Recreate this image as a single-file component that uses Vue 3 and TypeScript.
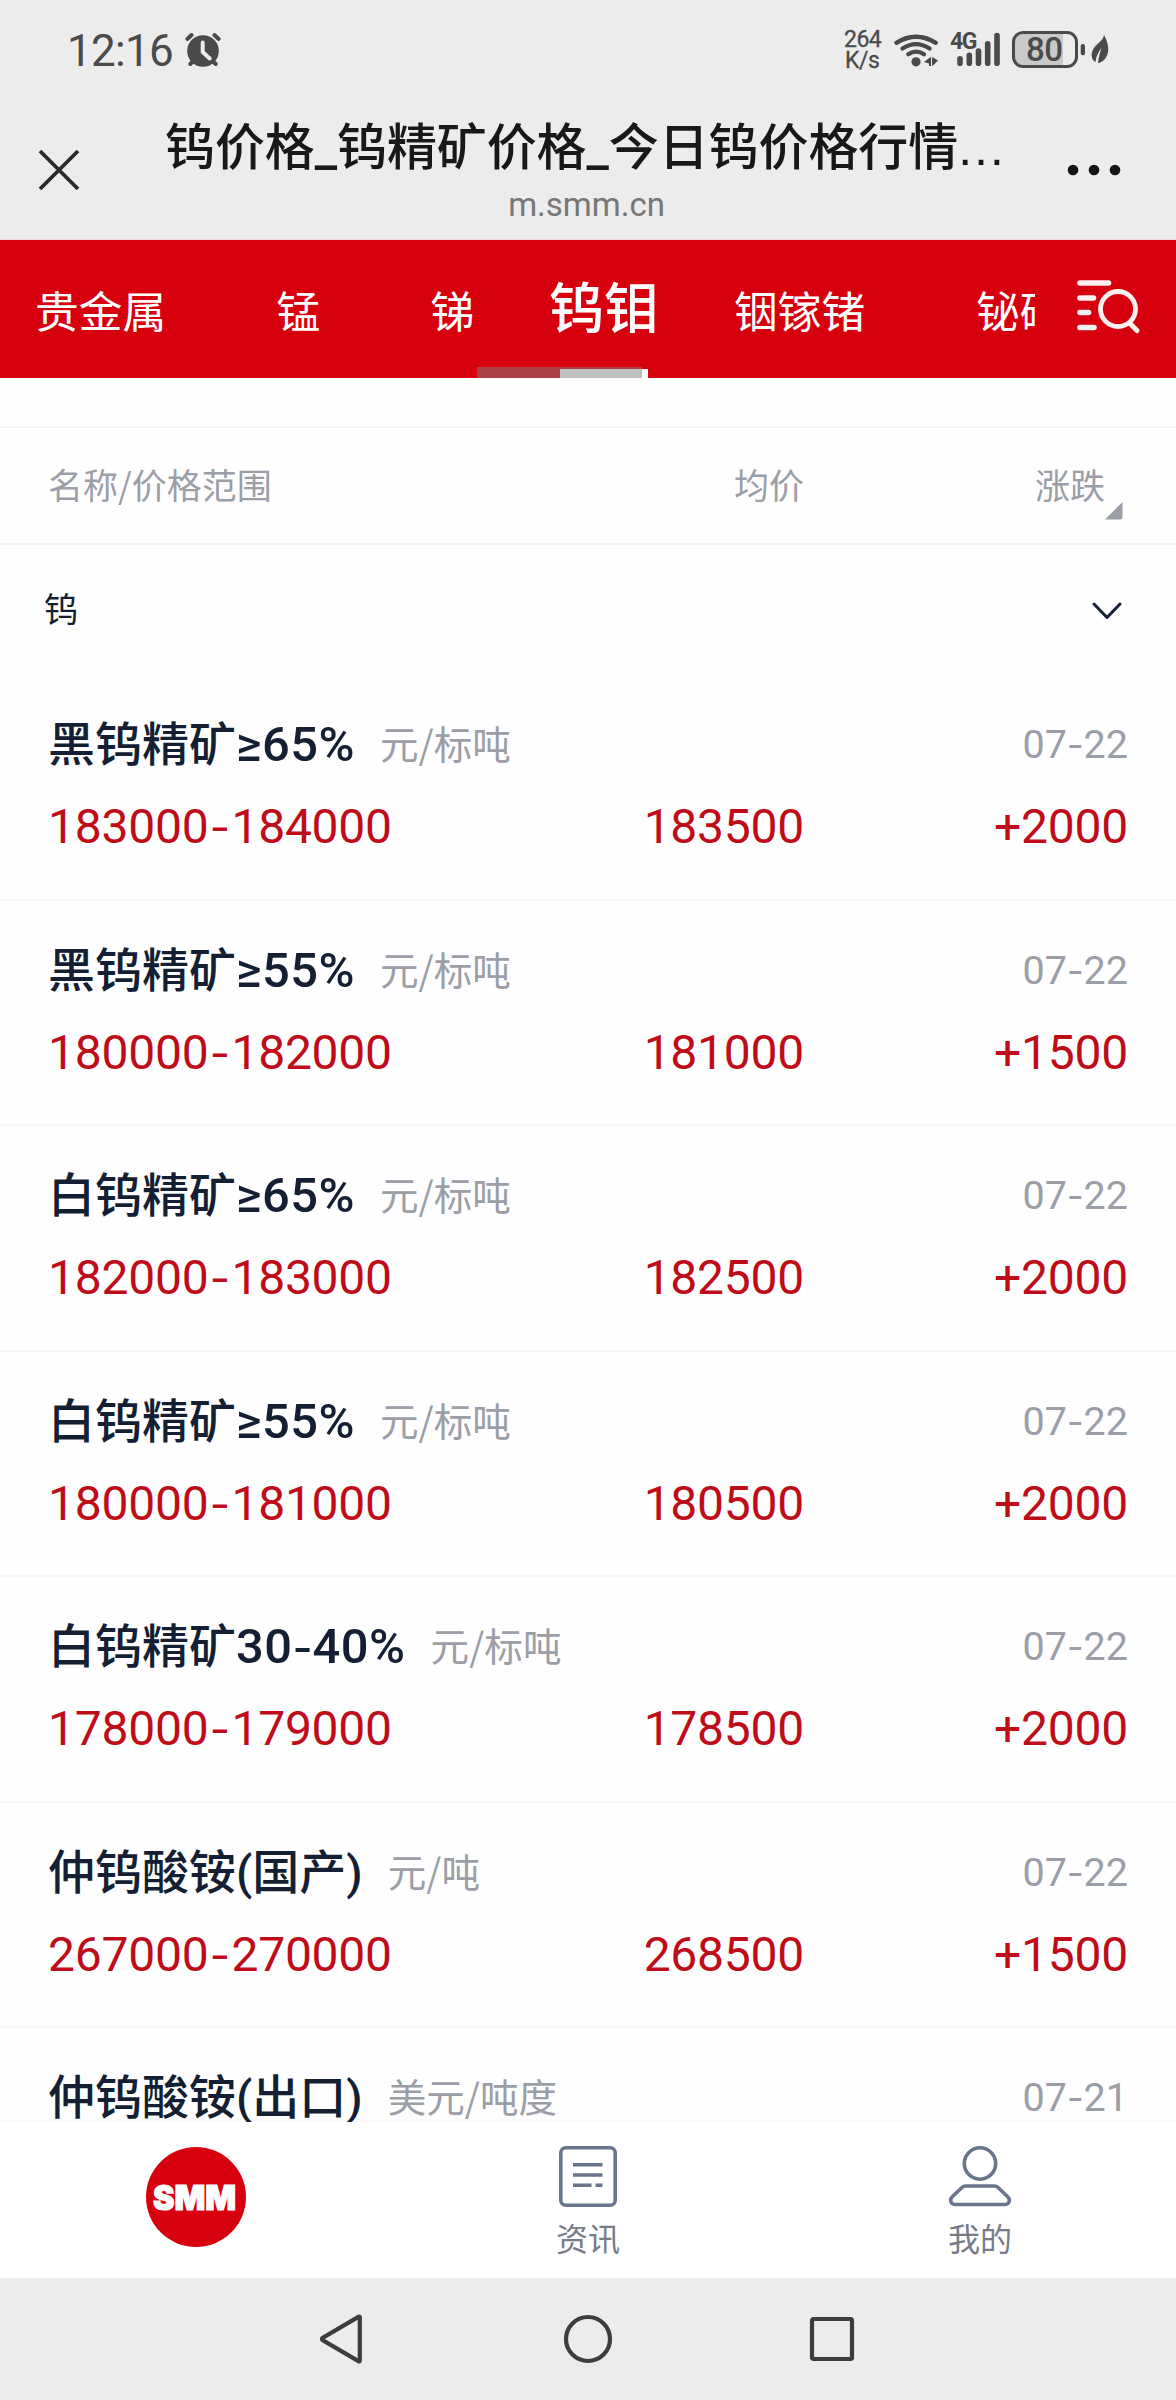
<script setup lang="ts">
import { h } from 'vue'

interface Quote {
  name: string
  unit: string
  date: string
  range: string
  avg: string
  change: string
}

const quotes: Quote[] = [
  { name: '黑钨精矿≥65%', unit: '元/标吨', date: '07-22', range: '183000-184000', avg: '183500', change: '+2000' },
  { name: '黑钨精矿≥55%', unit: '元/标吨', date: '07-22', range: '180000-182000', avg: '181000', change: '+1500' },
  { name: '白钨精矿≥65%', unit: '元/标吨', date: '07-22', range: '182000-183000', avg: '182500', change: '+2000' },
  { name: '白钨精矿≥55%', unit: '元/标吨', date: '07-22', range: '180000-181000', avg: '180500', change: '+2000' },
  { name: '白钨精矿30-40%', unit: '元/标吨', date: '07-22', range: '178000-179000', avg: '178500', change: '+2000' },
  { name: '仲钨酸铵(国产)', unit: '元/吨', date: '07-22', range: '267000-270000', avg: '268500', change: '+1500' },
  { name: '仲钨酸铵(出口)', unit: '美元/吨度', date: '07-21', range: '', avg: '', change: '' },
]

// Renders a value, wrapping figures and the wider hyphen used between them.
const Figures = (props: { text: string }) => {
  const parts = props.text.split(/([≥\d%]+|-)/).filter(Boolean)
  return h(
    'span',
    parts.map((p) => (p === '-' ? h('span', { class: 'hyphen' }, p) : /\d/.test(p) ? h('span', { class: 'fig' }, p) : p)),
  )
}
Figures.props = ['text']
</script>

<template>
  <div class="screen">
    <header class="top">
      <div class="status">
        <span class="clock">12:16</span>
        <svg class="alarm" width="38" height="38" viewBox="184 31 38 38">
          <g stroke="#4a4a4a" stroke-width="4" stroke-linecap="round">
            <path d="M187.3 39l4.3-4M218.7 39l-4.3-4M190.3 64l4-4M215.7 64l-4-4" />
          </g>
          <circle cx="203" cy="51" r="15.8" fill="#4a4a4a" />
          <path d="M202.7 42.500v9.500l7 6.500" fill="none" stroke="#ececec" stroke-width="4" stroke-linecap="round" stroke-linejoin="round" />
        </svg>
        <div class="speed"><span>264</span><span>K/s</span></div>
        <svg class="wifi" width="48" height="38" viewBox="892 30 48 38">
          <g fill="none" stroke="#4a4a4a" stroke-width="4.200" stroke-linecap="round">
            <path d="M896.600 42.700Q916 31 935.600 42.700" />
            <path d="M896.600 42.700Q916 30.500 935.600 42.700" />
            <path d="M902.500 48.600Q916 39.500 929.600 48.600" />
            <path d="M908.300 54.300Q916 49 924 54.300" />
          </g>
          <circle cx="916" cy="61.800" r="4.600" fill="#4a4a4a" />
          <path d="M924 62l7-5.200v9.200h-2v-2.500zM938 60.500l-6-3.500v9l2-1.500z" fill="#4a4a4a" />
        </svg>
        <span class="net">4G</span>
        <svg class="bars" width="43" height="36" viewBox="957 31 43 36">
          <g stroke="#4a4a4a" stroke-width="5.600" stroke-linecap="round">
            <path d="M960 58.800v4.500M969.300 55.300v8M978.500 51v12.300M987.700 43.800v19.500M997 35.500v27.800" />
          </g>
        </svg>
        <div class="battery"><span>80</span></div>
        <svg class="leaf" width="30" height="38" viewBox="1080 31 30 38">
          <rect x="1080.700" y="44" width="4.300" height="11.300" rx="2" fill="#4a4a4a" />
          <path d="M1104 35c6 10 6.500 23-4.500 28l-1.500-.5c.5-5 2-10 3.500-15-3 4.500-5.500 9-6 14.500-6-3-4.500-12 1-17 3.500-3.500 6.500-5 7.500-10z" fill="#4a4a4a" />
        </svg>
      </div>
      <div class="bar">
        <svg class="close" width="44" height="44" viewBox="0 0 44 44">
          <path d="M3 3L41 41M41 3L3 41" stroke="#2a2a2a" stroke-width="3.800" />
        </svg>
        <div class="heading">
          <h1>钨价格_钨精矿价格_今日钨价格行情<span class="dots">…</span></h1>
          <p>m.smm.cn</p>
        </div>
        <svg class="more" width="54" height="12" viewBox="0 0 54 12">
          <circle cx="6" cy="6" r="5.300" /><circle cx="27" cy="6" r="5.300" /><circle cx="48" cy="6" r="5.300" />
        </svg>
      </div>
    </header>

    <nav class="tabs">
      <div class="strip">
        <span class="t1">贵金属</span>
        <span class="t2">锰</span>
        <span class="t3">锑</span>
        <span class="t4 active">钨钼</span>
        <span class="t5">铟镓锗</span>
        <span class="t6">铋硒</span>
        <i class="underline"></i>
        <i class="scroll"></i>
      </div>
      <svg class="find" width="66" height="58" viewBox="1075 278 66 58">
        <g fill="none" stroke="#fff" stroke-opacity="0.94" stroke-linecap="round">
          <path stroke-width="5.600" d="M1080 284h28.500M1080 299h13.500M1080 313.500h8.500M1080 328.500h14" />
          <circle cx="1118" cy="310" r="17.500" stroke-width="4.800" />
          <path stroke-width="5" d="M1130.500 325l6.500 6.500" />
        </g>
      </svg>
    </nav>

    <main>
      <div class="thead">
        <span>名称/价格范围</span>
        <span class="right">均价</span>
        <span class="right last">涨跌
          <svg class="tri" width="18" height="18" viewBox="0 0 18 18"><path d="M17.500 0v15q0 2.500-2.500 2.500H0z" fill="#9b9ea6" /></svg>
        </span>
      </div>
      <div class="group">
        <span>钨</span>
        <svg width="30" height="18" viewBox="0 0 30 18"><path d="M2 2l13 13.500L28 2" fill="none" stroke="#141f33" stroke-width="3" stroke-linecap="round" stroke-linejoin="round" /></svg>
      </div>
      <section v-for="q in quotes" :key="q.name" class="quote">
        <div class="line">
          <Figures class="name" :text="q.name" />
          <span class="unit">{{ q.unit }}</span>
          <Figures class="date" :text="q.date" />
        </div>
        <div class="nums">
          <Figures :text="q.range" />
          <span class="right">{{ q.avg }}</span>
          <span class="right">{{ q.change }}</span>
        </div>
      </section>
    </main>

    <footer class="menu">
      <div class="item home">
        <svg width="102" height="102" viewBox="0 0 102 102">
          <circle cx="51" cy="51" r="50" fill="#d7000f" />
          <text class="logo" x="8" y="63.500" textLength="83" lengthAdjust="spacingAndGlyphs">SMM</text>
        </svg>
      </div>
      <div class="item">
        <svg width="64" height="64" viewBox="0 0 64 64" fill="none" stroke="#68758a" stroke-width="3.600">
          <rect x="4.800" y="3.800" width="54.400" height="57.400" rx="5" />
          <path d="M17 20.700h29.500M17 31h29.500M17 41.300h18.500M39.500 41.300h7" stroke-linecap="butt" />
        </svg>
        <span>资讯</span>
      </div>
      <div class="item">
        <svg width="64" height="64" viewBox="0 0 64 64" fill="none" stroke="#68758a" stroke-width="3.600">
          <circle cx="32" cy="19.500" r="15.700" />
          <path d="M17.500 42h29q2 0 3.500 1.500l9.500 9c3.500 3.500 1.500 8-3 8H7.500c-4.500 0-6.500-4.500-3-8l9.500-9q1.500-1.500 3.500-1.500z" />
        </svg>
        <span>我的</span>
      </div>
    </footer>

    <div class="sysnav">
      <svg width="48" height="50" viewBox="2 0 48 50"><path d="M41.800 3.200v43.600q0 1-1 .5L4.500 26q-1-1 0-2L40.800 2.700q1-.5 1 .5z" /></svg>
      <svg width="50" height="50" viewBox="0 0 50 50"><circle cx="25" cy="25" r="22" /></svg>
      <svg width="48" height="50" viewBox="0 0 48 50"><rect x="4" y="5" width="40" height="40" rx="1.500" /></svg>
    </div>
  </div>
</template>

<style>
body {
  margin: 0;
  background: #fff;
}
.hyphen {
  font-family: Inter, sans-serif;
  font-size: 0.92em;
  line-height: 1;
}
.nums .hyphen {
  margin: 0 1.5px;
}
.name .fig {
  font-size: 1.04em;
  letter-spacing: 0.5px;
  line-height: 1;
}
</style>

<style scoped>
.screen {
  width: 1176px;
  height: 2400px;
  display: flex;
  flex-direction: column;
  overflow: hidden;
  background: #fefefe;
  font-family: Roboto, 'Noto Sans CJK SC', sans-serif;
}
svg {
  display: block;
  flex: none;
}
.top {
  height: 240px;
  flex: none;
  background: #ececec;
  box-sizing: border-box;
  border-bottom: 1px solid #f7d3d6;
}
.status {
  height: 100px;
  display: flex;
  align-items: flex-start;
  color: #4a4a4a;
}
.clock {
  width: 117px;
  margin-left: 67px;
  margin-top: 24px;
  font-size: 44px;
  letter-spacing: -0.7px;
  line-height: 54px;
  white-space: nowrap;
}
.alarm {
  margin-top: 31px;
}
.speed {
  width: 48px;
  margin: 29px 0 0 622px;
  display: flex;
  flex-direction: column;
  font-size: 23px;
  line-height: 21px;
  letter-spacing: -0.5px;
  -webkit-text-stroke: 0.3px #4a4a4a;
}
.speed span:last-child {
  padding-left: 1px;
}
.wifi {
  margin: 30px 0 0 0;
}
.net {
  width: 7px;
  margin: 31px 0 0 10px;
  font-size: 23px;
  line-height: 21px;
  font-weight: 700;
  letter-spacing: -1.5px;
}
.bars {
  margin-top: 31px;
}
.battery {
  width: 66px;
  height: 37px;
  margin: 31px 0 0 12px;
  box-sizing: border-box;
  border: 3px solid #4a4a4a;
  border-radius: 11px;
  background: linear-gradient(90deg, #c9c9c9 48px, transparent 48px);
  display: flex;
  align-items: center;
  padding-left: 11px;
  font-size: 33px;
  font-weight: 500;
  letter-spacing: -0.5px;
  line-height: 31px;
}
.leaf {
  margin: 31px 0 0 2px;
}
.bar {
  display: flex;
  align-items: flex-start;
}
.close {
  margin: 48px 0 0 37px;
}
.heading {
  flex: none;
  width: 840px;
  margin-left: 84px;
}
h1 {
  margin: 13px 0 0;
  font-size: 50px;
  line-height: 70px;
  font-weight: 500;
  color: #181818;
  white-space: nowrap;
  letter-spacing: -0.1px;
}
.dots {
  margin-left: -2px;
  font-family: 'Liberation Sans', sans-serif;
  font-weight: 400;
}
p {
  margin: 1px 0 0 3px;
  font-size: 33px;
  line-height: 42px;
  color: #777;
  text-align: center;
}
.more {
  margin: 63.500px 0 0 62px;
  fill: #141414;
}
.tabs {
  height: 138px;
  flex: none;
  background: #d7000f;
  display: flex;
}
.strip {
  position: relative;
  width: 1035px;
  overflow: hidden;
  display: flex;
  align-items: flex-start;
  color: #fff;
  font-family: 'Noto Sans CJK SC', sans-serif;
  font-size: 43.700px;
  line-height: 60px;
  white-space: nowrap;
}
.strip span {
  flex: none;
  margin-top: 39px;
}
.strip .t1 { margin-left: 35px; width: 241.500px; }
.t2 { width: 154px; }
.t3 { width: 118.500px; }
.strip .t4 { width: 185px; margin-top: 34px; }
.t5 { width: 242px; }
.active {
  font-size: 55px;
  font-weight: 500;
}
.underline {
  position: absolute;
  left: 560px;
  bottom: 0;
  width: 88px;
  height: 9px;
  background: #fff;
}
.scroll {
  position: absolute;
  left: 477px;
  bottom: 0;
  width: 165px;
  height: 11px;
  background: rgba(128, 128, 128, 0.5);
}
.find {
  margin: 37px 0 0 40px;
}
main {
  height: 1744px;
  flex: none;
  overflow: hidden;
}
.thead,
.nums {
  display: grid;
  grid-template-columns: 1fr 240px 324px;
  padding: 0 48px;
}
.thead {
  margin-top: 48px;
  height: 119px;
  box-sizing: border-box;
  border: solid #f4f5fb;
  border-width: 2px 0;
  font-size: 35px;
  line-height: 112px;
  color: #9b9ea6;
  font-family: 'Noto Sans CJK SC', sans-serif;
}
.right {
  text-align: right;
}
.last {
  position: relative;
  padding-right: 23px;
}
.tri {
  position: absolute;
  right: 5px;
  top: 74px;
}
.group {
  height: 130px;
  padding: 0 54px 0 44px;
  display: flex;
  align-items: center;
  justify-content: space-between;
  font-size: 34px;
  color: #141f33;
  box-sizing: border-box;
  border-bottom: 1px solid #fcfcfd;
}
.group span {
  padding-bottom: 4px;
}
.group svg {
  margin-top: 2px;
}
.quote {
  height: 225.500px;
  box-sizing: border-box;
  padding-top: 42px;
  border-bottom: 2px solid #f5f6fb;
}
.line {
  height: 56px;
  display: flex;
  align-items: flex-start;
  line-height: 56px;
  padding: 0 48px;
  white-space: nowrap;
}
.name {
  font-size: 47px;
  font-weight: 500;
  color: #141f33;
}
.unit {
  margin-left: 25px;
  font-family: 'Noto Sans CJK SC', sans-serif;
  font-size: 38.600px;
  line-height: 50px;
  color: #9b9ea6;
}
.date {
  margin-left: auto;
  font-size: 39.500px;
  line-height: 55px;
  color: #9b9ea6;
}
.nums {
  margin-top: 26px;
  font-size: 48px;
  line-height: 56px;
  letter-spacing: -0.25px;
  color: #be0d19;
}
.menu {
  height: 156px;
  flex: none;
  display: grid;
  grid-template-columns: repeat(3, 1fr);
  background: #fff;
  box-shadow: 0 -2px 4px rgba(0, 0, 0, 0.03);
  position: relative;
}
.item {
  display: flex;
  flex-direction: column;
  align-items: center;
  padding-top: 22px;
  font-size: 32px;
  line-height: 44px;
  color: #777c88;
}
.home {
  padding-top: 24px;
}
.item span {
  margin-top: 10px;
}
.logo {
  font-family: Inter, sans-serif;
  font-weight: 900;
  font-size: 34px;
  fill: #fff;
  stroke: #fff;
  stroke-width: 1.200;
}
.sysnav {
  flex: 1;
  background: #ececec;
  display: flex;
  align-items: center;
  justify-content: center;
  gap: 195px;
}
.sysnav svg {
  fill: none;
  stroke: #3d3d3d;
  stroke-width: 4.200;
}
</style>
